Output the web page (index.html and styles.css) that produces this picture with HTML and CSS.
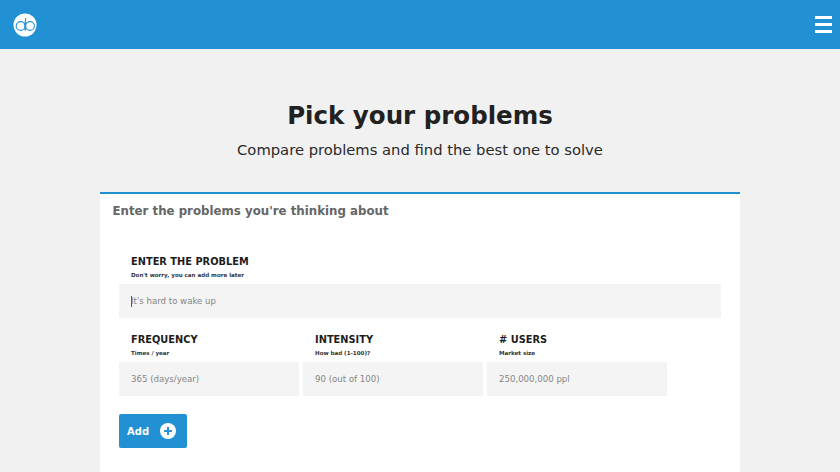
FILE: index.html
```html
<!DOCTYPE html>
<html lang="en">
<head>
<meta charset="utf-8">
<title>Pick your problems</title>
<link rel="stylesheet" href="styles.css">
</head>
<body>
<header class="topbar">
  <svg class="logo" width="24" height="24" viewBox="0 0 24 24">
    <circle cx="12" cy="12" r="11.5" fill="#fff"/>
    <circle cx="7.6" cy="13" r="4.4" fill="none" stroke="#2a93d5" stroke-width="1.1"/>
    <path d="M12 8.6V17.4" fill="none" stroke="#2a93d5" stroke-width="1.1"/>
    <path d="M12.6 5V17.4" fill="none" stroke="#2a93d5" stroke-width="1.1"/>
    <circle cx="17" cy="13" r="4.4" fill="none" stroke="#2a93d5" stroke-width="1.1"/>
  </svg>
  <div class="burger"><span></span><span></span><span></span></div>
</header>
<main class="page">
  <section class="hero">
    <h1>Pick your problems</h1>
    <p>Compare problems and find the best one to solve</p>
  </section>
  <section class="card">
    <h2>Enter the problems you're thinking about</h2>
    <form class="form">
      <div class="field">
        <label class="label">ENTER THE PROBLEM</label>
        <small class="hint">Don't worry, you can add more later</small>
        <div class="input"><i class="caret"></i>It's hard to wake up</div>
      </div>
      <div class="row">
        <div class="field">
          <label class="label">FREQUENCY</label>
          <small class="hint">Times / year</small>
          <div class="input">365 (days/year)</div>
        </div>
        <div class="field">
          <label class="label">INTENSITY</label>
          <small class="hint">How bad (1-100)?</small>
          <div class="input">90 (out of 100)</div>
        </div>
        <div class="field">
          <label class="label"># USERS</label>
          <small class="hint">Market size</small>
          <div class="input">250,000,000 ppl</div>
        </div>
      </div>
      <button class="add" type="button">Add
        <svg width="16" height="16" viewBox="0 0 16 16">
          <circle cx="8" cy="8" r="8" fill="#fff"/>
          <path d="M8 4V12M4 8H12" stroke="#2a93d5" stroke-width="2"/>
        </svg>
      </button>
    </form>
  </section>
</main>
</body>
</html>
```
FILE: styles.css
```css
html, body { margin: 0; height: 100%; overflow: hidden; }
body {
  background: #f1f1f1;
  font-family: "DejaVu Sans", sans-serif;
  color: #222;
}
.topbar {
  height: 49px;
  background: #2191d3;
  display: flex;
  align-items: center;
  justify-content: space-between;
  padding: 0 8px 0 13px;
}
.logo { display: block; }
.burger { display: flex; flex-direction: column; gap: 4px; }
.burger span { display: block; width: 17px; height: 3px; background: #fff; }
.hero { text-align: center; padding-top: 51px; }
.hero h1 { margin: 0; font-size: 24.5px; line-height: 32px; font-weight: 700; color: #212121; }
.hero p { margin: 8px 0 0; font-size: 14.75px; line-height: 20px; color: #2a2a2a; }
.card {
  margin: 32px 100px 0;
  background: #fff;
  border-top: 2px solid #2191d3;
  height: 300px;
  padding: 0 19px;
}
.card h2 {
  margin: 0 0 0 -6.5px;
  padding-top: 10px;
  font-size: 11.8px;
  line-height: 15px;
  font-weight: 700;
  color: #666;
}
.form { padding-top: 36px; }
.label { display: block; padding-left: 12px; font-size: 9.8px; line-height: 14px; font-weight: 700; color: #1c1c1c; letter-spacing: 0.02px; }
.hint { display: block; padding-left: 12px; margin-top: 2px; font-size: 5.56px; line-height: 9px; font-weight: 700; color: #333; }
.input {
  margin-top: 4px;
  height: 34px;
  background: #f4f4f4;
  padding-left: 12px;
  display: flex;
  align-items: center;
  font-size: 8.6px;
  color: #858585;
}
.caret { width: 1px; height: 11px; background: #555; margin-right: -1px; }
.row { display: flex; gap: 4px; margin-top: 15px; }
.row .field { width: 180px; }
.add {
  margin-top: 18px;
  width: 68px;
  height: 34px;
  border: 0;
  border-radius: 2px;
  background: #2191d3;
  color: #fff;
  font: 700 10px "DejaVu Sans", sans-serif;
  display: flex;
  align-items: center;
  justify-content: space-between;
  padding: 0 11px 0 8px;
}
```
